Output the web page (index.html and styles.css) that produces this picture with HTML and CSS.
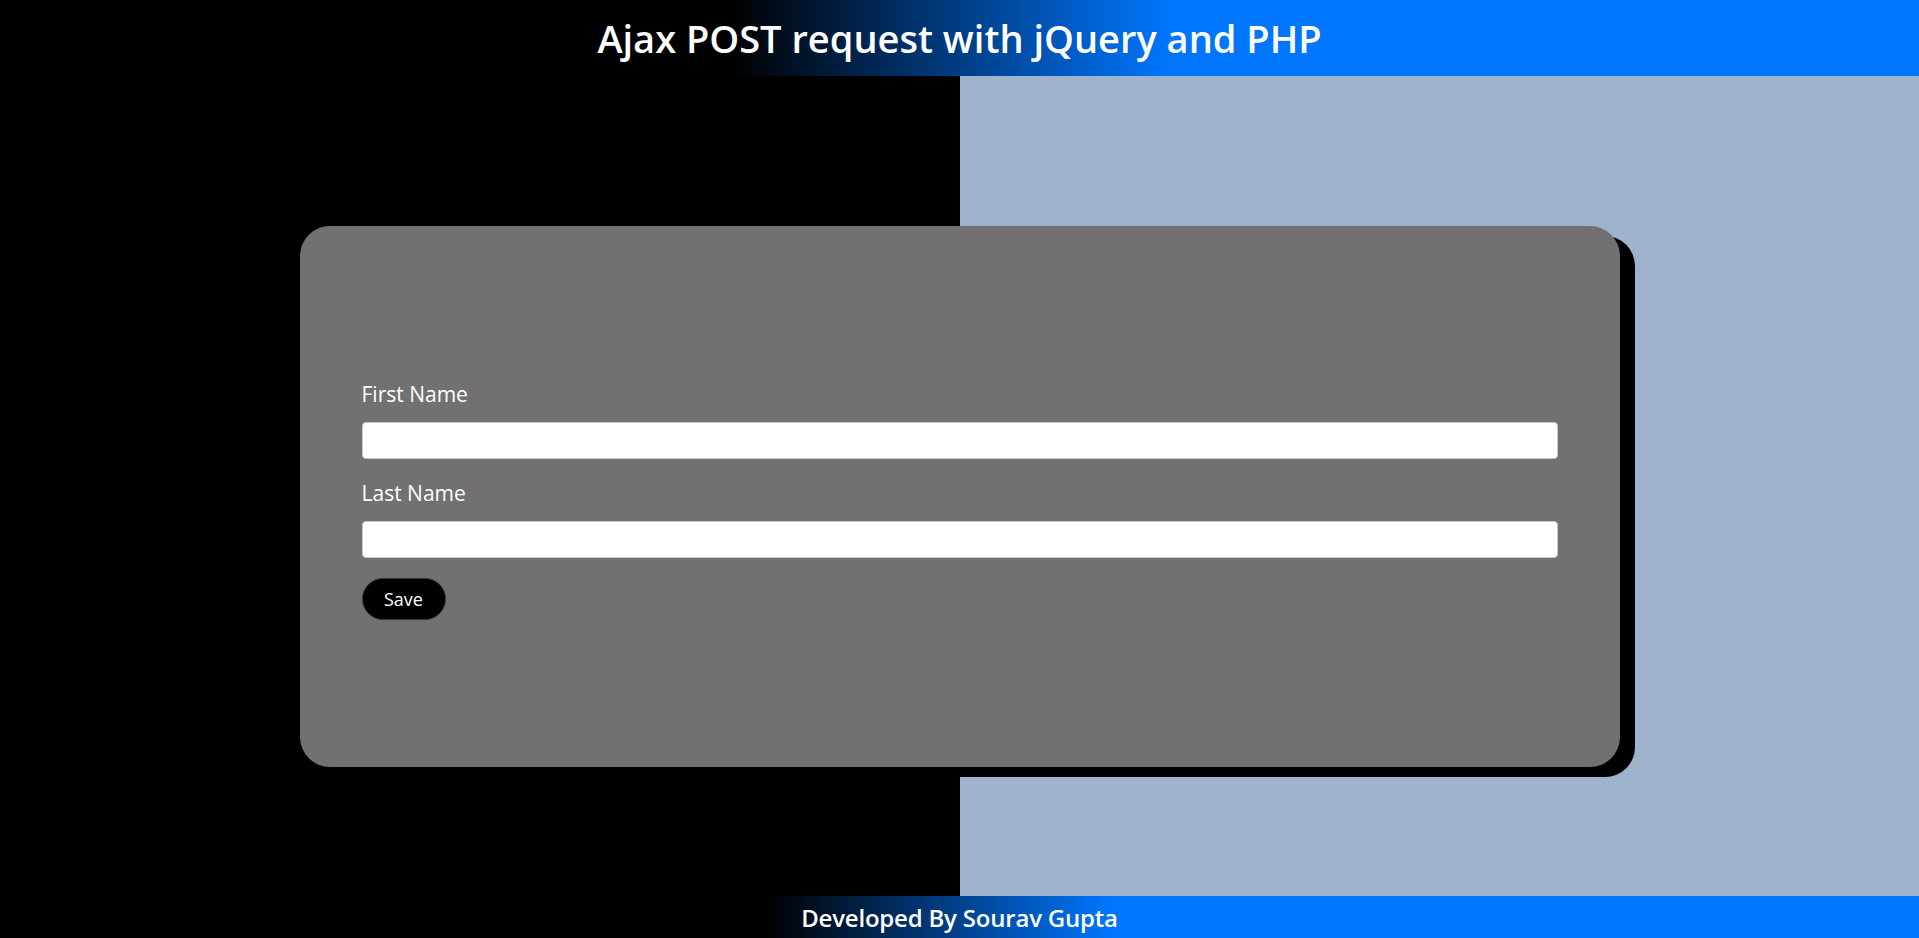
FILE: index.html
```html
<!DOCTYPE html>
<html>
<head>
<meta charset="utf-8" />
<title>Ajax POST request with jQuery and PHP</title>
<link rel="stylesheet" href="styles.css">
</head>
<body>
<div class="header">
	<h1>Ajax POST request with jQuery and PHP</h1>
</div>
<div class="main">
	<div class="card">
		<form class="form">
			<label for="fname">First Name</label>
			<input type="text" id="fname" name="fname" />
			<label for="lname">Last Name</label>
			<input type="text" id="lname" name="lname" />
			<button type="button" class="save">Save</button>
		</form>
	</div>
</div>
<div class="footer">
	<p>Developed By Sourav Gupta</p>
</div>
</body>
</html>
```

FILE: styles.css
```css
html,body,h1,p{margin:0;padding:0;}
body{font-family:"Open Sans","Noto Sans",sans-serif;color:#fff;height:938px;display:flex;flex-direction:column;overflow:hidden;}
.header{height:76px;display:flex;align-items:center;justify-content:center;background:linear-gradient(to right,#000 38%,#0076fe 61%);}
.header h1{font-size:38px;font-weight:600;}
.main{flex:1;padding-top:150px;background:linear-gradient(to right,#000 50%,#9eb3cc 50%);}
.card{width:1320px;height:541px;margin:0 auto;background:#727070;border-radius:30px;box-shadow:15px 10px 0 #000;display:flex;flex-direction:column;justify-content:center;box-sizing:border-box;padding:6px 62px 0 62px;}
.form{display:flex;flex-direction:column;align-items:flex-start;}
.form label{font-size:21px;line-height:28px;margin-bottom:14px;}
.form input{width:100%;height:37px;box-sizing:border-box;border:1px solid #c9c9c9;border-radius:4px;background:#fff;margin-bottom:20px;}
.save{width:84px;height:42px;border:1px solid #333;border-radius:21px;background:#000;color:#fff;font-family:inherit;font-size:18px;}
.footer{height:42px;display:flex;align-items:center;justify-content:center;background:linear-gradient(to right,#000 40%,#0076fe 58%);}
.footer p{font-size:24px;font-weight:600;letter-spacing:-0.2px;}
```
